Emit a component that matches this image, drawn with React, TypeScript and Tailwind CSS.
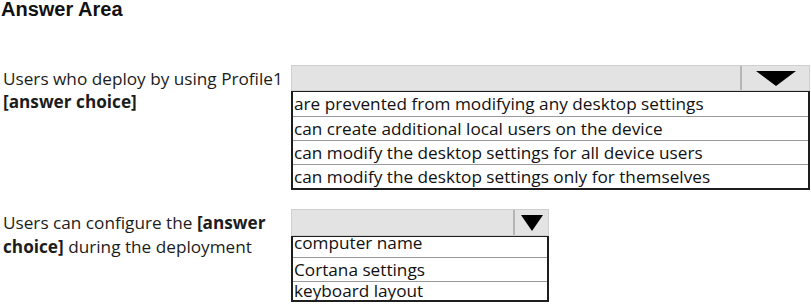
import React from "react"

const font = { fontFamily: "'Open Sans', 'Noto Sans', sans-serif" }

function Caret({ big }: { big?: boolean }) {
  return big ? (
    <svg width="40" height="15" viewBox="0 0 40 15">
      <polygon points="0,0 40,0 20,15" fill="#000" />
    </svg>
  ) : (
    <svg width="22" height="16" viewBox="0 0 22 16">
      <polygon points="0,0 22,0 11,16" fill="#000" />
    </svg>
  )
}

function Dropdown({
  options,
  width,
  arrowWidth,
  big,
  clipFirst,
}: {
  options: string[]
  width: string
  arrowWidth: string
  big?: boolean
  clipFirst?: boolean
}) {
  const last = options.length - 1
  return (
    <div className={width}>
      <div className={`flex border border-[#cfcfcf] bg-[#e3e3e3] ${big ? "h-[26px]" : "h-[27px]"}`}>
        <div className="flex-1 border-r-2 border-[#b5b5b5]" />
        <div className={`flex items-center justify-center ${arrowWidth}`}>
          <Caret big={big} />
        </div>
      </div>
      <div className="border-2 border-t-[1.5px] border-[#1e1e1e] bg-white text-[#111]" style={font}>
        {options.map((o, i) => {
          let h = "h-[24px]"
          let shift = ""
          if (clipFirst && i === 0) {
            h = "h-[20px]"
            shift = "-mt-[6px]"
          }
          if (clipFirst && i === last) {
            h = "h-[19px]"
            shift = "-mt-[3px]"
          }
          return (
            <div
              key={o}
              className={`overflow-hidden pl-[1px] text-[17.2px] leading-[24px] ${
                i > 0 ? "border-t border-[#9a9a9a]" : ""
              } ${h}`}
            >
              <div className={shift}>{o}</div>
            </div>
          )
        })}
      </div>
    </div>
  )
}

export default function App() {
  return (
    <div className="relative h-[304px] w-[811px] overflow-hidden bg-white text-[#1c1c1c]">
      <h1
        className="pl-[1px] text-[20px] font-bold leading-[18px] text-[#111]"
        style={{ fontFamily: "'Liberation Sans', Arial, sans-serif" }}
      >
        Answer Area
      </h1>

      <div className="mt-[47px] flex">
        <div className="w-[291px] pl-[3px] pt-[2px] text-[17.2px] leading-[23px]" style={font}>
          <div>Users who deploy by using Profile1</div>
          <div className="font-bold">[answer choice]</div>
        </div>
        <Dropdown
          width="w-[519px]"
          arrowWidth="w-[67px]"
          big
          options={[
            "are prevented from modifying any desktop settings",
            "can create additional local users on the device",
            "can modify the desktop settings for all device users",
            "can modify the desktop settings only for themselves",
          ]}
        />
      </div>

      <div className="mt-[19px] flex">
        <div className="w-[291px] pl-[3px] pt-[2px] text-[17.2px] leading-[24px]" style={font}>
          <div>
            Users can configure the <span className="font-bold">[answer</span>
          </div>
          <div>
            <span className="font-bold">choice]</span> during the deployment
          </div>
        </div>
        <Dropdown
          width="w-[258px]"
          arrowWidth="w-[33px]"
          clipFirst
          options={["computer name", "Cortana settings", "keyboard layout"]}
        />
      </div>
    </div>
  )
}
